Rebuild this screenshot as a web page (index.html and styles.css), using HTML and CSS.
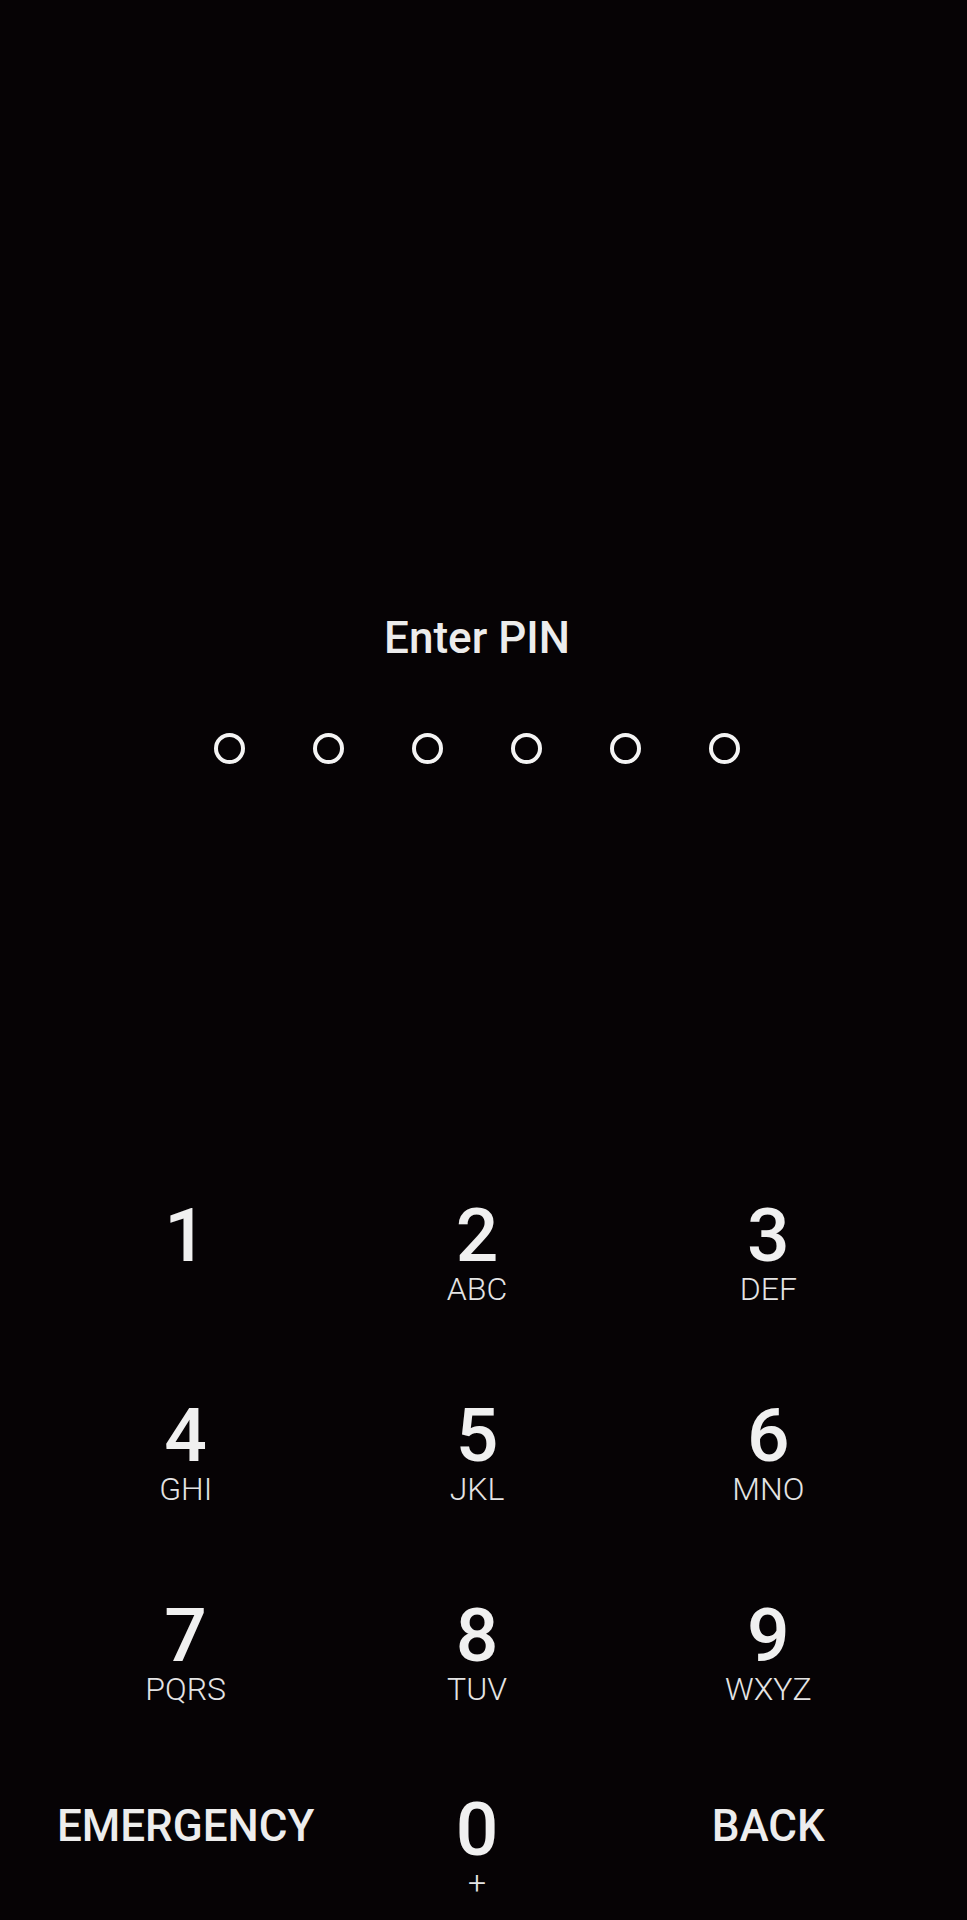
FILE: index.html
```html
<!DOCTYPE html>
<html lang="en">
<head>
<meta charset="utf-8">
<title>Enter PIN</title>
<link rel="stylesheet" href="styles.css">
</head>
<body>
<main class="screen">
  <h1 class="title">Enter PIN</h1>
  <div class="dots">
    <span class="dot"></span><span class="dot"></span><span class="dot"></span>
    <span class="dot"></span><span class="dot"></span><span class="dot"></span>
  </div>
  <div class="keypad">
    <div class="key"><span class="num">1</span><span class="sub"></span></div>
    <div class="key"><span class="num">2</span><span class="sub">ABC</span></div>
    <div class="key"><span class="num">3</span><span class="sub">DEF</span></div>
    <div class="key"><span class="num">4</span><span class="sub">GHI</span></div>
    <div class="key"><span class="num">5</span><span class="sub">JKL</span></div>
    <div class="key"><span class="num">6</span><span class="sub">MNO</span></div>
    <div class="key"><span class="num">7</span><span class="sub">PQRS</span></div>
    <div class="key"><span class="num">8</span><span class="sub">TUV</span></div>
    <div class="key"><span class="num">9</span><span class="sub">WXYZ</span></div>
    <div class="key key-last"><span class="action">EMERGENCY</span></div>
    <div class="key key-last"><span class="num">0</span><span class="sub">+</span></div>
    <div class="key key-last"><span class="action">BACK</span></div>
  </div>
</main>
</body>
</html>
```
FILE: styles.css
```css
html, body {
  margin: 0;
  padding: 0;
  background: #060305;
}
body {
  font-family: Roboto, "Liberation Sans", sans-serif;
  color: #efefef;
  min-height: 1920px;
}
.screen {
  padding: 612px 53px 0 40px;
  display: flex;
  flex-direction: column;
  align-items: center;
}
.title {
  margin: 0;
  font-size: 44px;
  line-height: 52px;
  font-weight: 500;
  color: #ececec;
}
.dots {
  margin-top: 69px;
  display: flex;
  gap: 68px;
}
.dot {
  width: 31px;
  height: 31px;
  box-sizing: border-box;
  border: 4px solid #f4f4f4;
  border-radius: 50%;
}
.keypad {
  margin-top: 433px;
  width: 100%;
  display: grid;
  grid-template-columns: repeat(3, 1fr);
  grid-template-rows: 108px 108px 108px 108px;
  row-gap: 92px;
}
.keypad .key-last {
  margin-top: -6px;
}
.key {
  display: flex;
  flex-direction: column;
  align-items: center;
}
.num {
  font-size: 75px;
  line-height: 76px;
  font-weight: 500;
  color: #f0f0f0;
}
.sub {
  font-size: 32px;
  line-height: 32px;
  font-weight: 300;
  color: #e4e4e4;
  height: 32px;
}
.action {
  margin-top: 9px;
  font-size: 44px;
  line-height: 52px;
  font-weight: 500;
  color: #ededed;
}
```
